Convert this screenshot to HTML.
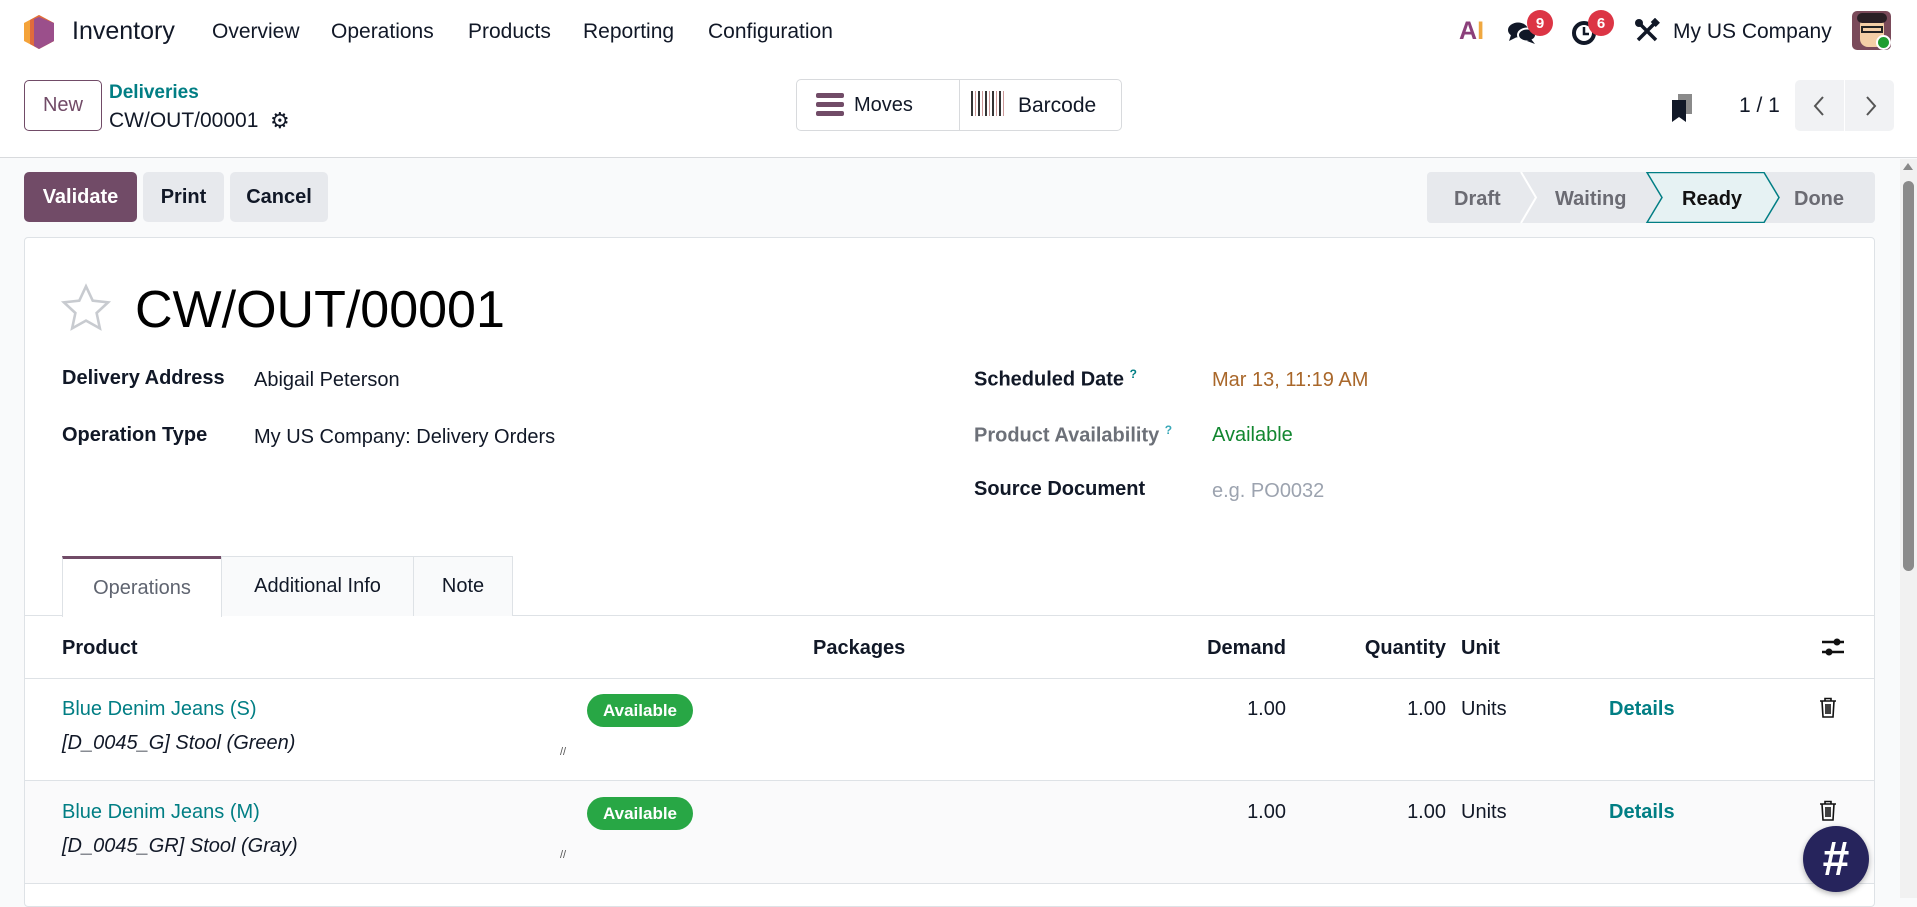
<!DOCTYPE html>
<html><head><meta charset="utf-8"><style>
*{box-sizing:border-box;margin:0;padding:0}
body{width:1917px;height:898px;overflow:hidden;background:#f9fafb;font-family:"Liberation Sans",sans-serif;color:#111827;position:relative;font-size:20px}
.a{position:absolute;white-space:nowrap}
.nav{left:0;top:0;width:1917px;height:158px;background:#fff;border-bottom:1px solid #d8dadd}
.btn{position:absolute;border-radius:5px;display:flex;align-items:center;justify-content:center;font-weight:bold;font-size:20px}
.lab{font-weight:bold;font-size:20px}
.tab{position:absolute;top:556px;height:60px;border:1px solid #dee2e6;border-bottom:none;display:flex;align-items:center;justify-content:center;font-size:20px;background:#f9fafb}
.badge{position:absolute;background:#dc3545;color:#fff;border-radius:50%;width:26px;height:26px;font-size:15px;font-weight:bold;display:flex;align-items:center;justify-content:center}
.link{color:#017e84}
.num{text-align:right}
</style></head><body>
<div class="a nav"></div>
<svg class="a" style="left:22px;top:14px" width="34" height="36" viewBox="0 0 34 36"><polygon points="17,1 32,9 32,27 17,35 2,27 2,9" fill="#f4a33a"/><polygon points="17,1 32,9 32,27 17,35 8,30 8,6" fill="#e06b3c"/><polygon points="17,3 32,9 32,27 17,35 12,32 12,5" fill="#9b4f8b"/></svg>
<div class="a" style="left:72px;top:17px;font-size:25px">Inventory</div>
<div class="a" style="left:212px;top:20px;font-size:21px">Overview</div>
<div class="a" style="left:331px;top:20px;font-size:21px">Operations</div>
<div class="a" style="left:468px;top:20px;font-size:21px">Products</div>
<div class="a" style="left:583px;top:20px;font-size:21px">Reporting</div>
<div class="a" style="left:708px;top:20px;font-size:21px">Configuration</div>
<div class="a" style="left:1459px;top:17px;font-size:25px;font-weight:bold;color:#8b3f7a">A<span style="color:#f0a840">I</span></div>
<svg class="a" style="left:1507px;top:20px" width="30" height="26" viewBox="0 0 30 26"><ellipse cx="11" cy="10" rx="10" ry="7.5" fill="#111827"/><path d="M4 15 L2 21 L10 17Z" fill="#111827"/><ellipse cx="20" cy="15" rx="9" ry="6.5" fill="#111827" stroke="#fff" stroke-width="2"/><path d="M24 19 L28 24 L20 21Z" fill="#111827"/></svg>
<div class="badge" style="left:1527px;top:10px">9</div>
<svg class="a" style="left:1571px;top:20px" width="26" height="26" viewBox="0 0 26 26"><circle cx="13" cy="13" r="10" fill="none" stroke="#111827" stroke-width="4"/><path d="M13 7v7h5" stroke="#111827" stroke-width="2.5" fill="none"/></svg>
<div class="badge" style="left:1588px;top:10px">6</div>
<svg class="a" style="left:1634px;top:18px" width="26" height="26" viewBox="0 0 26 26"><path d="M5 5 L22 22 M21 5 L4 22" stroke="#111827" stroke-width="3.5"/><circle cx="5" cy="5" r="4" fill="#111827"/><rect x="18" y="1" width="7" height="6" fill="#111827" transform="rotate(45 21 4)"/></svg>
<div class="a" style="left:1673px;top:20px;font-size:21px">My US Company</div>
<div class="a" style="left:1852px;top:11px;width:39px;height:39px;border-radius:5px;background:#7a4a5a;overflow:hidden"><div class="a" style="left:8px;top:6px;width:24px;height:30px;background:#f4cfa6;border-radius:8px"></div><div class="a" style="left:5px;top:2px;width:30px;height:10px;background:#2a1f25;border-radius:5px"></div><div class="a" style="left:9px;top:15px;width:22px;height:7px;border:2px solid #222"></div></div>
<div class="a" style="left:1876px;top:35px;width:15px;height:15px;border-radius:50%;background:#1f9d2f;border:2px solid #fff"></div>
<div class="btn" style="left:24px;top:80px;width:78px;height:51px;border:1px solid #714b67;color:#714b67;font-weight:normal;font-size:20px;background:#fff">New</div>
<div class="a link" style="left:109px;top:82px;font-size:19px;font-weight:bold">Deliveries</div>
<div class="a" style="left:109px;top:109px;font-size:21px">CW/OUT/00001</div>
<div class="a" style="left:270px;top:108px;font-size:22px">⚙</div>
<div class="a" style="left:796px;top:79px;width:326px;height:52px;border:1px solid #d8dadd;border-radius:5px;background:#fff"></div>
<div class="a" style="left:959px;top:80px;width:1px;height:50px;background:#d8dadd"></div>
<div class="a" style="left:816px;top:93px;width:28px;height:5px;background:#714b67;border-radius:2px"></div>
<div class="a" style="left:816px;top:102px;width:28px;height:5px;background:#714b67;border-radius:2px"></div>
<div class="a" style="left:816px;top:111px;width:28px;height:5px;background:#714b67;border-radius:2px"></div>
<div class="a" style="left:854px;top:94px;font-size:20px">Moves</div>
<div class="a" style="left:971px;top:91px;width:33px;height:25px;background:repeating-linear-gradient(90deg,#333 0 2px,#fff 2px 4px,#c99 4px 5px,#fff 5px 7px)"></div>
<div class="a" style="left:1018px;top:94px;font-size:21px">Barcode</div>
<svg class="a" style="left:1670px;top:94px" width="24" height="30" viewBox="0 0 24 30"><rect x="8" y="0" width="14" height="20" fill="#8a8a8a"/><path d="M2 6h14v22l-7-5-7 5z" fill="#111827"/></svg>
<div class="a" style="left:1739px;top:94px;font-size:21px">1 / 1</div>
<div class="a" style="left:1795px;top:80px;width:99px;height:51px;background:#f1f2f4;border-radius:5px"></div>
<div class="a" style="left:1844px;top:80px;width:1px;height:51px;background:#fff"></div>
<svg class="a" style="left:1810px;top:94px" width="20" height="24"><path d="M13 3 L5 12 L13 21" stroke="#555" stroke-width="2" fill="none"/></svg>
<svg class="a" style="left:1860px;top:94px" width="20" height="24"><path d="M7 3 L15 12 L7 21" stroke="#555" stroke-width="2" fill="none"/></svg>
<div class="btn" style="left:24px;top:172px;width:113px;height:50px;background:#714b67;color:#fff">Validate</div>
<div class="btn" style="left:143px;top:172px;width:81px;height:50px;background:#e7e9ed">Print</div>
<div class="btn" style="left:230px;top:172px;width:98px;height:50px;background:#e7e9ed">Cancel</div>
<svg class="a" style="left:1427px;top:172px" width="448" height="51" viewBox="0 0 448 51">
<rect x="0" y="0" width="448" height="51" rx="4" fill="#e7e9ed"/>
<path d="M94 0 L109 25.5 L94 51" stroke="#fff" stroke-width="2" fill="none"/>
<path d="M220 0.5 L337 0.5 L352 25.5 L337 50.5 L220 50.5 L235 25.5Z" fill="#e6f2f3" stroke="#017e84" stroke-width="1.5"/>
<text x="27" y="33" font-family="Liberation Sans" font-size="20" font-weight="bold" fill="#6b6b73">Draft</text>
<text x="128" y="33" font-family="Liberation Sans" font-size="20" font-weight="bold" fill="#6b6b73">Waiting</text>
<text x="255" y="33" font-family="Liberation Sans" font-size="20" font-weight="bold" fill="#111">Ready</text>
<text x="367" y="33" font-family="Liberation Sans" font-size="20" font-weight="bold" fill="#6b6b73">Done</text>
</svg>
<div class="a" style="left:1900px;top:159px;width:17px;height:739px;background:#f1f1f1"></div>
<div class="a" style="left:1903px;top:181px;width:11px;height:390px;background:#8a8a8a;border-radius:6px"></div>
<div class="a" style="left:1903px;top:163px;width:0;height:0;border-left:5px solid transparent;border-right:5px solid transparent;border-bottom:7px solid #888"></div>
<div class="a" style="left:24px;top:237px;width:1851px;height:670px;background:#fff;border:1px solid #dee2e6;border-radius:4px"></div>
<svg class="a" style="left:60px;top:283px" width="52" height="50" viewBox="0 0 24 23"><path d="M12 1.5l3.1 6.6 7.1.8-5.3 4.9 1.5 7.1L12 17.3l-6.4 3.6 1.5-7.1L1.8 8.9l7.1-.8z" fill="none" stroke="#c8cbd0" stroke-width="1.2"/></svg>
<div class="a" style="left:135px;top:280px;font-size:52px;color:#000">CW/OUT/00001</div>
<div class="a lab" style="left:62px;top:367px">Delivery Address</div>
<div class="a" style="left:254px;top:369px">Abigail Peterson</div>
<div class="a lab" style="left:62px;top:424px">Operation Type</div>
<div class="a" style="left:254px;top:426px">My US Company: Delivery Orders</div>
<div class="a lab" style="left:974px;top:367px">Scheduled Date <sup style="color:#017e84;font-size:12px">?</sup></div>
<div class="a" style="left:1212px;top:369px;color:#a9672a">Mar 13, 11:19 AM</div>
<div class="a lab" style="left:974px;top:423px;color:#6c7078">Product Availability <sup style="color:#3aa8b8;font-size:12px">?</sup></div>
<div class="a" style="left:1212px;top:424px;color:#11862f">Available</div>
<div class="a lab" style="left:974px;top:478px">Source Document</div>
<div class="a" style="left:1212px;top:480px;color:#9ca3af">e.g. PO0032</div>
<div class="a" style="left:24px;top:615px;width:1851px;height:1px;background:#dee2e6"></div>
<div class="tab" style="left:62px;width:160px;background:#fff;height:61px;border-top:3px solid #714b67;color:#5f6470">Operations</div>
<div class="tab" style="left:221px;width:193px">Additional Info</div>
<div class="tab" style="left:413px;width:100px">Note</div>
<div class="a lab" style="left:62px;top:637px">Product</div>
<div class="a lab" style="left:813px;top:637px">Packages</div>
<div class="a lab" style="left:1186px;top:637px;width:100px;text-align:right">Demand</div>
<div class="a lab" style="left:1346px;top:637px;width:100px;text-align:right">Quantity</div>
<div class="a lab" style="left:1461px;top:637px">Unit</div>
<svg class="a" style="left:1820px;top:636px" width="26" height="22" viewBox="0 0 26 22"><path d="M2 6h22M2 16h22" stroke="#111" stroke-width="2.5"/><circle cx="17" cy="6" r="3.5" fill="#111"/><circle cx="9" cy="16" r="3.5" fill="#111"/></svg>
<div class="a" style="left:24px;top:678px;width:1851px;height:1px;background:#dee2e6"></div>
<div class="a" style="left:25px;top:781px;width:1849px;height:102px;background:#fafafb"></div>
<div class="a" style="left:24px;top:780px;width:1851px;height:1px;background:#dee2e6"></div>
<div class="a" style="left:24px;top:883px;width:1851px;height:1px;background:#dee2e6"></div>
<div class="a link" style="left:62px;top:698px">Blue Denim Jeans (S)</div>
<div class="a" style="left:62px;top:732px;font-style:italic">[D_0045_G] Stool (Green)</div>
<div class="a" style="left:560px;top:746px;font-size:11px;color:#555">//</div>
<div class="a" style="left:587px;top:694px;width:106px;height:33px;border-radius:17px;background:#28a745;color:#fff;font-weight:bold;font-size:17px;display:flex;align-items:center;justify-content:center">Available</div>
<div class="a num" style="left:1186px;top:698px;width:100px">1.00</div>
<div class="a num" style="left:1346px;top:698px;width:100px">1.00</div>
<div class="a" style="left:1461px;top:698px">Units</div>
<div class="a link" style="left:1609px;top:698px;font-weight:bold">Details</div>
<svg class="a" style="left:1819px;top:697px" width="18" height="21" viewBox="0 0 18 21"><path d="M1 4h16M6 4V1.5h6V4M3 4l1 16h10l1-16M7 7v10M9 7v10M11 7v10" stroke="#111" stroke-width="1.6" fill="none"/></svg>
<div class="a link" style="left:62px;top:801px">Blue Denim Jeans (M)</div>
<div class="a" style="left:62px;top:835px;font-style:italic">[D_0045_GR] Stool (Gray)</div>
<div class="a" style="left:560px;top:849px;font-size:11px;color:#555">//</div>
<div class="a" style="left:587px;top:797px;width:106px;height:33px;border-radius:17px;background:#28a745;color:#fff;font-weight:bold;font-size:17px;display:flex;align-items:center;justify-content:center">Available</div>
<div class="a num" style="left:1186px;top:801px;width:100px">1.00</div>
<div class="a num" style="left:1346px;top:801px;width:100px">1.00</div>
<div class="a" style="left:1461px;top:801px">Units</div>
<div class="a link" style="left:1609px;top:801px;font-weight:bold">Details</div>
<svg class="a" style="left:1819px;top:800px" width="18" height="21" viewBox="0 0 18 21"><path d="M1 4h16M6 4V1.5h6V4M3 4l1 16h10l1-16M7 7v10M9 7v10M11 7v10" stroke="#111" stroke-width="1.6" fill="none"/></svg>
<div class="a" style="left:1803px;top:826px;width:66px;height:66px;border-radius:50%;background:#26245c;color:#fff;font-size:48px;font-weight:bold;display:flex;align-items:center;justify-content:center;box-shadow:0 2px 6px rgba(0,0,0,.3)">#</div>
</body></html>
